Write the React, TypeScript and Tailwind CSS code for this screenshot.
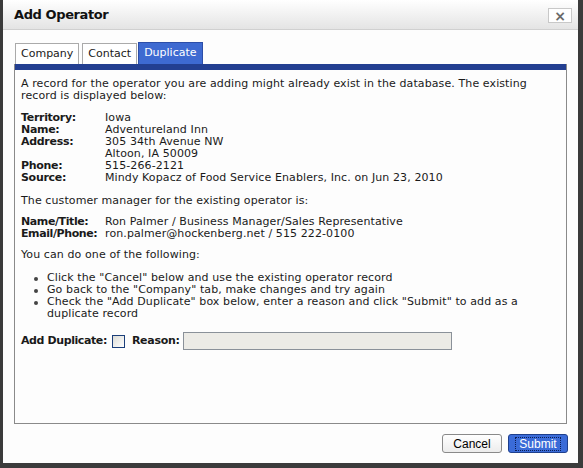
import React from 'react';

const RECORD = [
  { label: 'Territory:', lines: ['Iowa'] },
  { label: 'Name:', lines: ['Adventureland Inn'] },
  { label: 'Address:', lines: ['305 34th Avenue NW', 'Altoon, IA 50009'] },
  { label: 'Phone:', lines: ['515-266-2121'] },
  { label: 'Source:', lines: ['Mindy Kopacz of Food Service Enablers, Inc. on Jun 23, 2010'] },
];

const MANAGER = [
  { label: 'Name/Title:', value: 'Ron Palmer / Business Manager/Sales Representative' },
  { label: 'Email/Phone:', value: 'ron.palmer@hockenberg.net / 515 222-0100' },
];

const OPTIONS = [
  'Click the "Cancel" below and use the existing operator record',
  'Go back to the "Company" tab, make changes and try again',
  'Check the "Add Duplicate" box below, enter a reason and click "Submit" to add as a duplicate record',
];

export default function App() {
  return (
    <div className="w-[583px] h-[468px] bg-[#3b3b3b] overflow-hidden relative">
      {/* dialog */}
      <div className="absolute left-[3px] top-0 w-[575px] h-[463px] bg-[#fdfdfd] flex flex-col text-[#1a1a1a] [font-family:'DejaVu_Sans',Verdana,sans-serif]">
        {/* title bar */}
        <div className="h-[30px] flex items-center justify-between pl-[11px] pr-[6px] bg-gradient-to-b from-white to-[#e4e4e4] border-b border-[#d0d0d0]">
          <span className="text-[13px] font-bold tracking-[-0.4px] text-[#111] mt-[1px]">Add Operator</span>
          <button className="w-[24px] h-[15px] mt-[2px] flex items-center justify-center bg-white border border-[#c8c8c8] text-[#6a6a6a] text-[14px] leading-none font-bold">
            ×
          </button>
        </div>

        {/* tabs */}
        <div className="flex items-end gap-[3px] pl-[12px] mt-[13px] h-[21px] text-[11px]">
          <div className="h-[21px] px-[5px] flex items-center border border-b-0 border-[#aaa] bg-white">Company</div>
          <div className="h-[21px] px-[5px] flex items-center border border-b-0 border-[#aaa] bg-white">Contact</div>
          <div className="h-[22px] px-[5px] flex items-center border border-b-0 border-[#2c4ea8] bg-[#3e6ad1] text-white -ml-[2px]">Duplicate</div>
        </div>

        {/* panel */}
        <div className="mx-[11px] h-[360px] border border-t-0 border-[#8a8a8a] flex flex-col">
          <div className="h-[6px] bg-[#233f91]" />
          <div className="pl-[6px] pr-[20px] pt-[8px] text-[11px] leading-[12px] tracking-[0.1px]">
            <p>
              A record for the operator you are adding might already exist in the database. The existing record is
              displayed below:
            </p>

            <div className="mt-[10px]">
              {RECORD.map(r => (
                <div key={r.label} className="flex">
                  <span className="w-[84px] shrink-0 font-bold tracking-[-0.3px]">{r.label}</span>
                  <div>
                    {r.lines.map(l => (
                      <div key={l}>{l}</div>
                    ))}
                  </div>
                </div>
              ))}
            </div>

            <p className="mt-[11px]">The customer manager for the existing operator is:</p>

            <div className="mt-[9px]">
              {MANAGER.map(m => (
                <div key={m.label} className="flex">
                  <span className="w-[84px] shrink-0 font-bold tracking-[-0.4px]">{m.label}</span>
                  <span>{m.value}</span>
                </div>
              ))}
            </div>

            <p className="mt-[9px]">You can do one of the following:</p>

            <div className="mt-[11px] pl-[13px] pr-[14px]">
              {OPTIONS.map(o => (
                <div key={o} className="flex">
                  <span className="w-[4px] h-[4px] shrink-0 rounded-full bg-[#444] mt-[5px]" />
                  <span className="ml-[9px]">{o}</span>
                </div>
              ))}
            </div>

            <div className="mt-[12px] flex items-center">
              <span className="font-bold tracking-[-0.4px]">Add Duplicate:</span>
              <span className="ml-[5px] w-[13px] h-[13px] border border-[#1c3f7a] bg-gradient-to-br from-[#dcdcd6] to-white" />
              <span className="ml-[7px] font-bold tracking-[-0.3px]">Reason:</span>
              <span className="ml-[3px] w-[269px] h-[18px] border border-[#8a9199] bg-[#ecebe6]" />
            </div>
          </div>
        </div>

        {/* buttons */}
        <div className="flex justify-end gap-[6px] pr-[10px] mt-[10px] [font-family:'Liberation_Sans',Arial,sans-serif] text-[12px]">
          <button className="w-[60px] h-[19px] rounded-[3px] border border-[#8a8a8a] bg-gradient-to-b from-white to-[#ececec] text-black">
            Cancel
          </button>
          <button className="w-[60px] h-[19px] rounded-[3px] border border-[#1e3f8c] bg-[#3a6bd8] text-white flex items-center justify-center">
            <span className="border border-dotted border-[#0b1e55] px-[3px] leading-[12px]">Submit</span>
          </button>
        </div>
      </div>
    </div>
  );
}
